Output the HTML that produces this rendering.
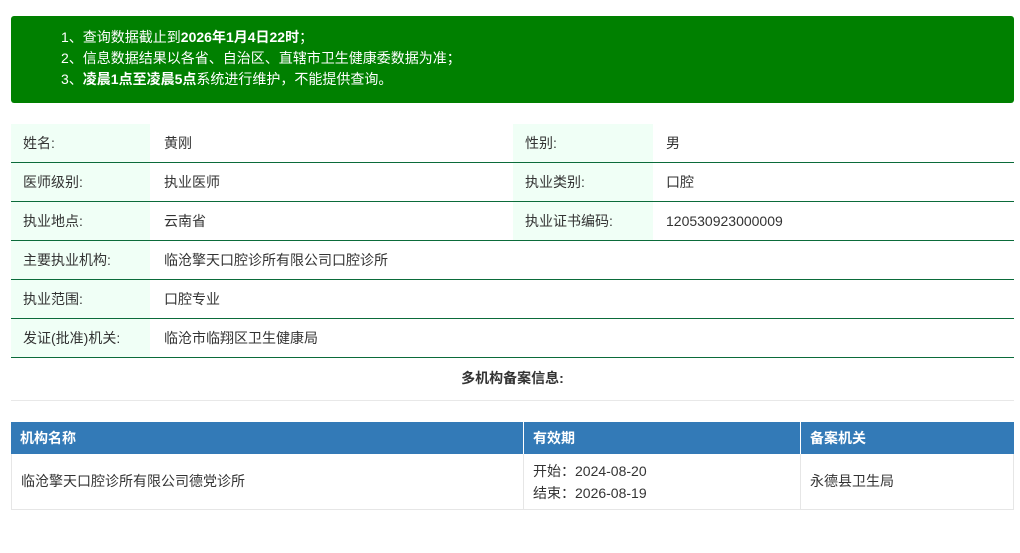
<!DOCTYPE html>
<html><head><meta charset="utf-8"><style>
*{margin:0;padding:0;box-sizing:border-box}
body{width:1020px;height:553px;background:#fff;font-family:"Liberation Sans","Noto Sans CJK SC",sans-serif;font-size:14px;color:#333;position:relative;overflow:hidden}
.notice{position:absolute;left:11px;top:16px;width:1003px;height:87px;background:#008000;border-radius:3px;color:#fff;font-size:14px;line-height:21px;padding:11px 0 0 50px}
.row{position:absolute;left:11px;width:1003px;height:39px;border-bottom:1px solid #0b6b3a}
.lab{position:absolute;top:0;height:38px;background:#f0fff6;line-height:38px;padding-left:12px}
.val{position:absolute;top:0;line-height:38px}
.t{position:absolute;left:11px;width:1003px}
.th{position:absolute;top:422px;height:32px;background:#337ab7;color:#fff;font-weight:bold;line-height:32px;padding-left:9px}
.td{position:absolute;top:454px;height:56px;border:1px solid #e6e6e6;border-top:none;padding-left:9px}
</style></head><body>
<div class="notice">1、查询数据截止到<b>2026年1月4日22时</b>；<br>2、信息数据结果以各省、自治区、直辖市卫生健康委数据为准；<br>3、<b>凌晨1点至凌晨5点</b>系统进行维护，不能提供查询。</div>

<div class="row" style="top:124px"><div class="lab" style="left:0;width:139px">姓名:</div><div class="val" style="left:153px">黄刚</div><div class="lab" style="left:502px;width:140px">性别:</div><div class="val" style="left:655px">男</div></div>
<div class="row" style="top:163px"><div class="lab" style="left:0;width:139px">医师级别:</div><div class="val" style="left:153px">执业医师</div><div class="lab" style="left:502px;width:140px">执业类别:</div><div class="val" style="left:655px">口腔</div></div>
<div class="row" style="top:202px"><div class="lab" style="left:0;width:139px">执业地点:</div><div class="val" style="left:153px">云南省</div><div class="lab" style="left:502px;width:140px">执业证书编码:</div><div class="val" style="left:655px">120530923000009</div></div>
<div class="row" style="top:241px"><div class="lab" style="left:0;width:139px">主要执业机构:</div><div class="val" style="left:153px">临沧擎天口腔诊所有限公司口腔诊所</div></div>
<div class="row" style="top:280px"><div class="lab" style="left:0;width:139px">执业范围:</div><div class="val" style="left:153px">口腔专业</div></div>
<div class="row" style="top:319px"><div class="lab" style="left:0;width:139px">发证(批准)机关:</div><div class="val" style="left:153px">临沧市临翔区卫生健康局</div></div>

<div class="t" style="top:368px;height:33px;border-bottom:1px solid #e8e8e8;text-align:center;font-weight:bold;line-height:20px">多机构备案信息:</div>

<div class="th" style="left:11px;width:512px">机构名称</div>
<div class="th" style="left:524px;width:276px">有效期</div>
<div class="th" style="left:801px;width:213px">备案机关</div>
<div class="td" style="left:11px;width:513px;line-height:55px">临沧擎天口腔诊所有限公司德党诊所</div>
<div class="td" style="left:523px;width:278px;padding-top:6px;line-height:22px">开始：2024-08-20<br>结束：2026-08-19</div>
<div class="td" style="left:800px;width:214px;line-height:55px">永德县卫生局</div>
</body></html>
